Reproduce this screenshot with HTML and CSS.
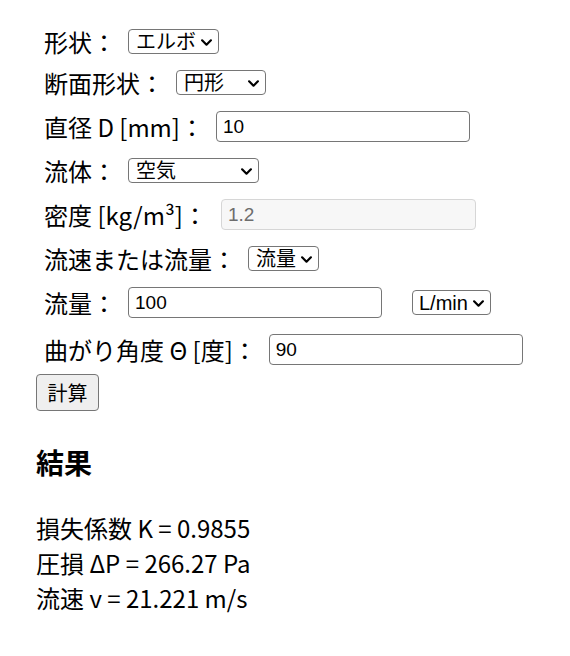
FILE: index.html
```html
<!DOCTYPE html>
<html lang="ja">
<head>
<meta charset="utf-8">
<title>エルボ圧損計算</title>
<link rel="stylesheet" href="styles.css">
</head>
<body>
<main class="page">
  <form class="calc">
    <div class="row row-s"><label>形状：</label><span class="sel-wrap"><select class="sel sel-shape"><option>エルボ</option></select><svg class="chev" viewBox="0 0 10 6"><path d="M1 1 L5 5 L9 1"/></svg></span></div>
    <div class="row row-s"><label>断面形状：</label><span class="sel-wrap"><select class="sel sel-section"><option>円形</option></select><svg class="chev" viewBox="0 0 10 6"><path d="M1 1 L5 5 L9 1"/></svg></span></div>
    <div class="row row-i"><label>直径 D [mm]：</label><input class="txt" type="text" value="10"></div>
    <div class="row row-s"><label>流体：</label><span class="sel-wrap"><select class="sel sel-fluid"><option>空気</option></select><svg class="chev" viewBox="0 0 10 6"><path d="M1 1 L5 5 L9 1"/></svg></span></div>
    <div class="row row-i"><label>密度 [kg/m³]：</label><input class="txt txt-density" type="text" value="1.2" disabled></div>
    <div class="row row-s"><label>流速または流量：</label><span class="sel-wrap"><select class="sel sel-mode"><option>流量</option></select><svg class="chev" viewBox="0 0 10 6"><path d="M1 1 L5 5 L9 1"/></svg></span></div>
    <div class="row row-i"><label>流量：</label><input class="txt" type="text" value="100"><span class="sel-wrap unit-wrap"><select class="sel sel-unit"><option>L/min</option></select><svg class="chev" viewBox="0 0 10 6"><path d="M1 1 L5 5 L9 1"/></svg></span></div>
    <div class="row row-i"><label>曲がり角度 Θ [度]：</label><input class="txt" type="text" value="90"></div>
    <button type="button" class="btn">計算</button>
  </form>
  <h3 class="result-title">結果</h3>
  <div class="results">
    <div>損失係数 K = 0.9855</div>
    <div>圧損 ΔP = 266.27 Pa</div>
    <div>流速 v = 21.221 m/s</div>
  </div>
</main>
</body>
</html>
```

FILE: styles.css
```css
body {
  margin: 8px;
  background: #ffffff;
  color: #000000;
  font-family: "Noto Sans CJK JP", "Noto Sans", sans-serif;
}

.page {
  padding: 18px 28px 0;
}

.calc {
  display: flex;
  flex-direction: column;
  align-items: flex-start;
}

.row {
  display: flex;
  align-items: center;
  gap: 12px;
  padding-left: 8px;
  margin-bottom: 10px;
}

.row:last-of-type {
  margin-bottom: 6px;
}

.row-s { height: 31px; }
.row-i { height: 37px; }

.row label {
  font-size: 24px;
  line-height: 1;
  white-space: nowrap;
}

.sel-wrap {
  position: relative;
  display: inline-flex;
}

.unit-wrap {
  margin-left: 18px;
}

.sel {
  box-sizing: border-box;
  -webkit-appearance: none;
  appearance: none;
  height: 25px;
  margin: 0;
  padding: 1px 20px 0 7px;
  border: 1px solid #767676;
  border-radius: 4px;
  background: #ffffff;
  font-family: "Liberation Sans", "Noto Sans CJK JP", sans-serif;
  font-size: 20px;
  line-height: 22px;
  color: #000;
}

.chev {
  position: absolute;
  right: 7px;
  top: 10px;
  width: 11px;
  height: 7px;
  pointer-events: none;
}

.chev path {
  fill: none;
  stroke: #000;
  stroke-width: 2;
  stroke-linecap: round;
  stroke-linejoin: round;
}

.sel-shape { width: 91px; padding-right: 18px; }
.sel-section { width: 90px; }
.sel-fluid { width: 131px; }
.sel-mode { width: 71px; padding-right: 16px; }
.sel-unit { width: 79px; padding-left: 6px; }

.txt {
  box-sizing: border-box;
  width: 254px;
  height: 31px;
  padding: 0 6px;
  border: 1px solid #767676;
  border-radius: 4px;
  background: #ffffff;
  font-family: "Liberation Sans", sans-serif;
  font-size: 19px;
  color: #000;
}

.txt-density {
  width: 255px;
  margin-left: 2px;
}

.txt:disabled {
  background: #f7f7f7;
  border-color: #d6d6d6;
  color: #6d6d6d;
}

.btn {
  box-sizing: border-box;
  width: 63px;
  height: 37px;
  padding: 0;
  border: 1px solid #767676;
  border-radius: 4px;
  background: #efefef;
  font-family: "Noto Sans CJK JP", sans-serif;
  font-size: 20px;
  color: #000;
}

.result-title {
  margin: 31px 0 28px;
  font-size: 28px;
  line-height: 40px;
  font-weight: bold;
}

.results {
  font-size: 24px;
  line-height: 35px;
}
```
